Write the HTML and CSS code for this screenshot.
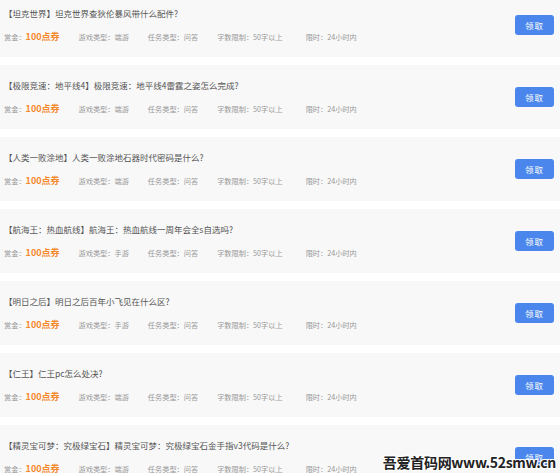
FILE: index.html
```html
<!DOCTYPE html>
<html lang="zh-CN">
<head>
  <meta charset="UTF-8" />
  <meta name="viewport" content="width=device-width, initial-scale=1.0"/>
  <title>任务大厅</title>
  <link rel="stylesheet" href="styles.css">
</head>
<body>

  <div class="task-list">
    <div class="task">
      <div class="task-info">
        <p class="task-title">【坦克世界】坦克世界查狄伦暴风带什么配件?</p>
        <div class="task-meta">
          <span>赏金：<b class="reward">100点券</b></span>
          <span>游戏类型：端游</span>
          <span>任务类型：问答</span>
          <span>字数限制：50字以上</span>
          <span>限时：24小时内</span>
        </div>
      </div>
      <button type="button" class="take-btn">领取</button>
    </div>

    <div class="task">
      <div class="task-info">
        <p class="task-title">【极限竞速：地平线4】极限竞速：地平线4雷霆之姿怎么完成?</p>
        <div class="task-meta">
          <span>赏金：<b class="reward">100点券</b></span>
          <span>游戏类型：端游</span>
          <span>任务类型：问答</span>
          <span>字数限制：50字以上</span>
          <span>限时：24小时内</span>
        </div>
      </div>
      <button type="button" class="take-btn">领取</button>
    </div>

    <div class="task">
      <div class="task-info">
        <p class="task-title">【人类一败涂地】人类一败涂地石器时代密码是什么?</p>
        <div class="task-meta">
          <span>赏金：<b class="reward">100点券</b></span>
          <span>游戏类型：端游</span>
          <span>任务类型：问答</span>
          <span>字数限制：50字以上</span>
          <span>限时：24小时内</span>
        </div>
      </div>
      <button type="button" class="take-btn">领取</button>
    </div>

    <div class="task">
      <div class="task-info">
        <p class="task-title">【航海王：热血航线】航海王：热血航线一周年会全s自选吗?</p>
        <div class="task-meta">
          <span>赏金：<b class="reward">100点券</b></span>
          <span>游戏类型：手游</span>
          <span>任务类型：问答</span>
          <span>字数限制：50字以上</span>
          <span>限时：24小时内</span>
        </div>
      </div>
      <button type="button" class="take-btn">领取</button>
    </div>

    <div class="task">
      <div class="task-info">
        <p class="task-title">【明日之后】明日之后百年小飞见在什么区?</p>
        <div class="task-meta">
          <span>赏金：<b class="reward">100点券</b></span>
          <span>游戏类型：手游</span>
          <span>任务类型：问答</span>
          <span>字数限制：50字以上</span>
          <span>限时：24小时内</span>
        </div>
      </div>
      <button type="button" class="take-btn">领取</button>
    </div>

    <div class="task">
      <div class="task-info">
        <p class="task-title">【仁王】仁王pc怎么处决?</p>
        <div class="task-meta">
          <span>赏金：<b class="reward">100点券</b></span>
          <span>游戏类型：端游</span>
          <span>任务类型：问答</span>
          <span>字数限制：50字以上</span>
          <span>限时：24小时内</span>
        </div>
      </div>
      <button type="button" class="take-btn">领取</button>
    </div>

    <div class="task">
      <div class="task-info">
        <p class="task-title">【精灵宝可梦：究极绿宝石】精灵宝可梦：究极绿宝石金手指v3代码是什么?</p>
        <div class="task-meta">
          <span>赏金：<b class="reward">100点券</b></span>
          <span>游戏类型：端游</span>
          <span>任务类型：问答</span>
          <span>字数限制：50字以上</span>
          <span>限时：24小时内</span>
        </div>
      </div>
      <button type="button" class="take-btn">领取</button>
    </div>
  </div>

  <div class="watermark">吾爱首码网www.52smw.cn</div>

</body>
</html>
```

FILE: styles.css
```css
body {
  font-family: "Noto Sans CJK SC", "Noto Sans", sans-serif;
  background: #ffffff;
  margin: 0;
  padding: 0;
  color: #555;
  overflow: hidden;
}

.task-list {
  display: flex;
  flex-direction: column;
  gap: 8px;
  margin-top: -7px;
}

.task {
  display: flex;
  align-items: center;
  justify-content: space-between;
  height: 64px;
  padding: 0 6px 0 4px;
  background: #f8f8f8;
}

.task-info {
  display: flex;
  flex-direction: column;
  gap: 12px;
}

.task-title {
  margin: 0;
  font-size: 8.5px;
  line-height: 12px;
  color: #555;
}

.task-meta {
  display: flex;
  align-items: center;
  gap: 19px;
  font-size: 7.2px;
  line-height: 12px;
  color: #999;
}

.task-meta span:last-child {
  margin-left: 4px;
}

.reward {
  font-size: 9px;
  font-weight: bold;
  color: #f5892c;
}

.take-btn {
  width: 39px;
  height: 20px;
  padding: 0;
  border: none;
  border-radius: 3px;
  background: #4a86ec;
  color: #fff;
  font-family: inherit;
  font-size: 8.5px;
  letter-spacing: 1px;
  cursor: pointer;
}

.watermark {
  position: absolute;
  right: 4px;
  top: 454px;
  font-family: "Noto Sans CJK SC", sans-serif;
  font-size: 14px;
  font-weight: bold;
  line-height: 16px;
  color: #222;
  letter-spacing: -0.3px;
  text-shadow: 1px 1px 0 #fff, -1px -1px 0 #fff, 1px -1px 0 #fff, -1px 1px 0 #fff;
}
```
